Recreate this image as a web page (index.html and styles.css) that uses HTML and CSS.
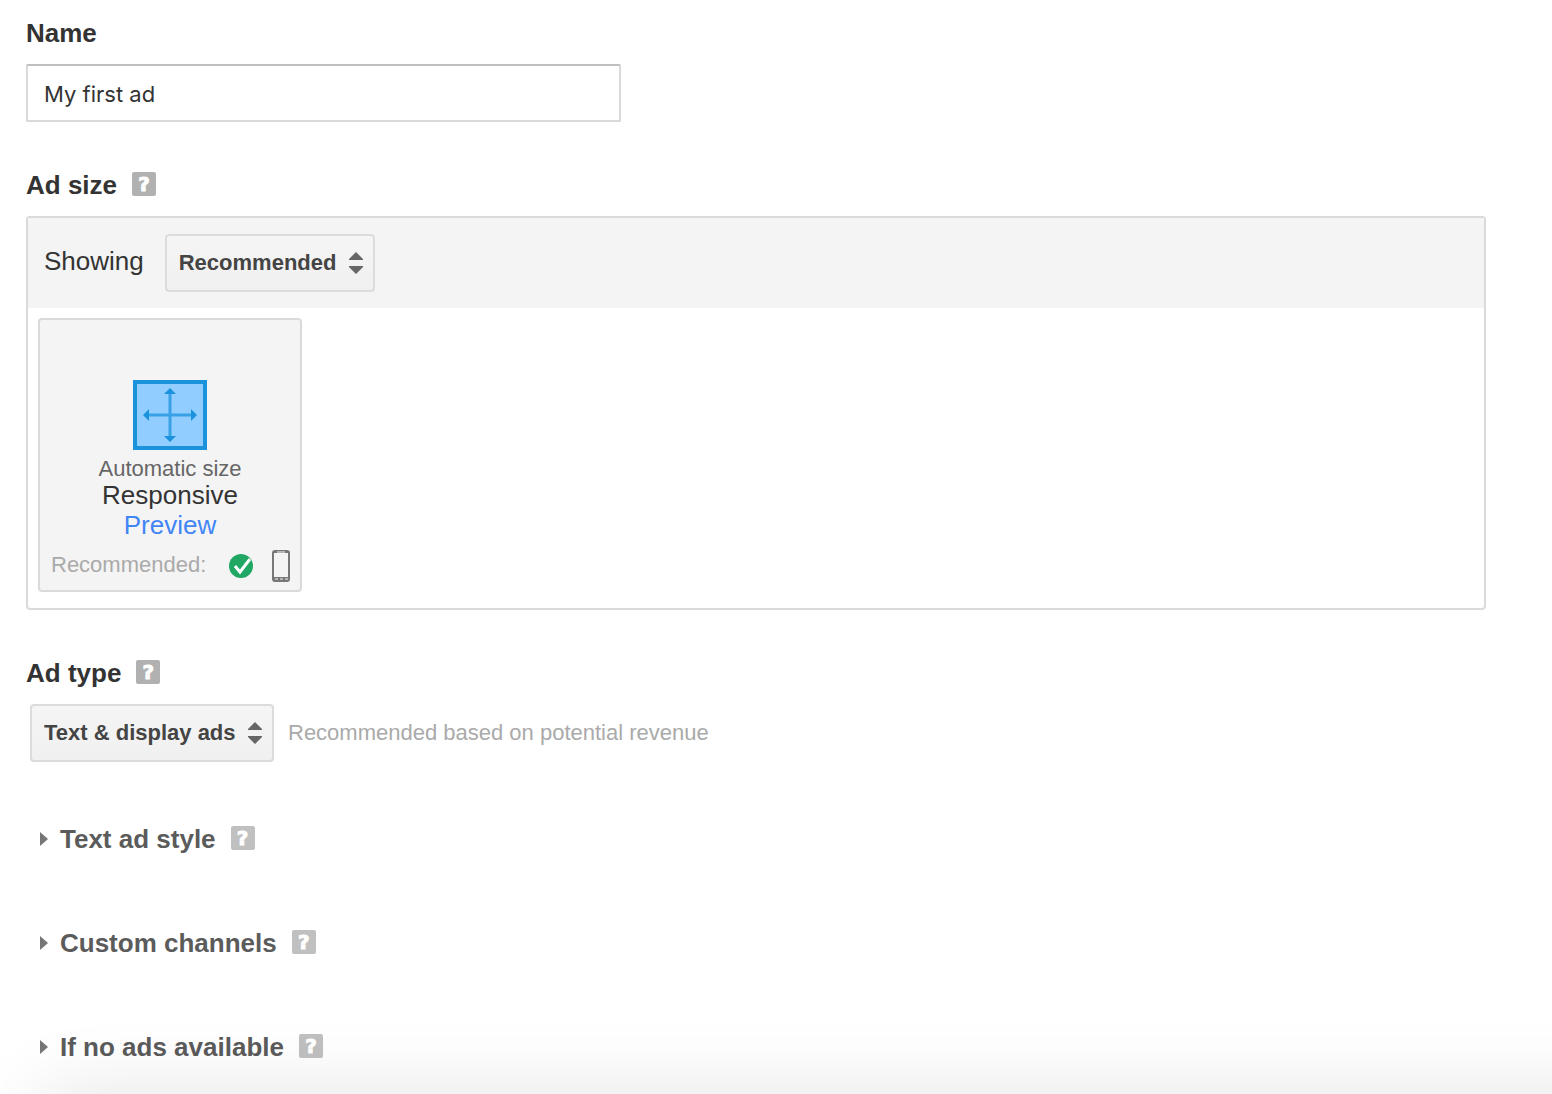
FILE: index.html
```html
<!DOCTYPE html>
<html lang="en">

<head>
  <meta charset="UTF-8" />
  <title>New ad unit</title>
  <link rel="stylesheet" href="styles.css">
</head>

<body>
  <form class="ad-form">

    <section class="field">
      <div class="heading">
        <label for="adName">Name</label>
      </div>
      <input class="text-input" type="text" id="adName" value="My first ad">
    </section>

    <section class="field">
      <div class="heading">
        <h2>Ad size</h2>
        <button type="button" class="help">?</button>
      </div>
      <div class="panel">
        <div class="panel-header">
          <label for="showing">Showing</label>
          <div class="select">
            <select id="showing">
              <option>Recommended</option>
              <option>Horizontal</option>
              <option>Vertical</option>
            </select>
            <svg class="arrows" viewBox="0 0 14 22"><path d="M7 0l7 7v1H0V7zM0 14h14v1l-7 7-7-7z" /></svg>
          </div>
        </div>
        <div class="panel-body">
          <div class="size-card">
            <svg class="size-icon" viewBox="0 0 74 70">
              <rect x="2" y="2" width="70" height="66" fill="#92cdff" stroke="#1a92dc" stroke-width="4" />
              <path d="M37 13v44M15 35h44" stroke="#38a0e4" stroke-width="3" />
              <path d="M37 8l6 6h-12zM37 62l6-6h-12zM10 35l6-6v12zM64 35l-6-6v12z" fill="#1a92dc" />
            </svg>
            <span class="size-kind">Automatic size</span>
            <span class="size-name">Responsive</span>
            <a href="#preview">Preview</a>
            <div class="size-footer">
              <span>Recommended:</span>
              <svg class="check" viewBox="0 0 24 24">
                <circle cx="12" cy="12" r="12" fill="#20a763" />
                <path d="M6 12l5 6L21 5" fill="none" stroke="#fff" stroke-width="3" />
              </svg>
              <svg class="phone" viewBox="0 0 18 32">
                <rect width="18" height="32" rx="3" fill="#777" />
                <path d="M2 3h14v24H2z" fill="#f4f4f4" />
                <path d="M5 2h8M3 29h3M8 29h3M13 29h3" stroke="#ccc" stroke-width="1.5" />
              </svg>
            </div>
          </div>
        </div>
      </div>
    </section>

    <section class="field">
      <div class="heading">
        <label for="adType">Ad type</label>
        <button type="button" class="help">?</button>
      </div>
      <div class="type-row">
        <div class="select">
          <select id="adType">
            <option>Text &amp; display ads</option>
            <option>Display ads only</option>
            <option>Text ads only</option>
          </select>
          <svg class="arrows" viewBox="0 0 14 22"><path d="M7 0l7 7v1H0V7zM0 14h14v1l-7 7-7-7z" /></svg>
        </div>
        <span class="hint">Recommended based on potential revenue</span>
      </div>
    </section>

    <div class="sections">
      <details>
        <summary>
          <h2>Text ad style</h2>
          <button type="button" class="help">?</button>
        </summary>
      </details>
      <details>
        <summary>
          <h2>Custom channels</h2>
          <button type="button" class="help">?</button>
        </summary>
      </details>
      <details>
        <summary>
          <h2>If no ads available</h2>
          <button type="button" class="help">?</button>
        </summary>
      </details>
    </div>

  </form>

  <div class="footer-shadow"></div>
</body>

</html>
```
FILE: styles.css
```css
* {
  box-sizing: border-box;
}

body {
  margin: 0;
  background: #fff;
  color: #333;
  font-family: "Liberation Sans", Arial, sans-serif;
  font-size: 26px;
  line-height: 30px;
}

h2 {
  margin: 0;
  font-size: 26px;
}

.ad-form {
  padding: 18px 66px 0 26px;
}

.field {
  margin-bottom: 48px;
}

.heading {
  display: flex;
  align-items: center;
  margin-bottom: 16px;
  font-weight: bold;
}

.help {
  width: 24px;
  height: 24px;
  margin: 0 0 2px 15px;
  padding: 0;
  border: none;
  border-radius: 2px;
  background: #b1b1b1;
  color: #fff;
  font: bold 20px/24px "DejaVu Sans", sans-serif;
  -webkit-text-stroke: 1px #fff;
}

.text-input {
  display: block;
  width: 100%;
  max-width: 595px;
  height: 58px;
  padding: 2px 16px 0;
  border: 2px solid #d9d9d9;
  border-top-color: #c0c0c0;
  border-radius: 2px;
  color: #333;
  font-family: Inter, sans-serif;
  font-size: 22px;
}

/* selects */
.select {
  position: relative;
}

.select select {
  appearance: none;
  display: block;
  height: 58px;
  padding: 0 36px 2px 12px;
  border: 2px solid #dcdcdc;
  border-radius: 4px;
  background: linear-gradient(#f5f5f5, #f0f0f0);
  color: #444;
  font: bold 22px "Liberation Sans", Arial, sans-serif;
}

.arrows {
  position: absolute;
  top: 18px;
  right: 12px;
  width: 14px;
  height: 22px;
  fill: #666;
  pointer-events: none;
}

/* ad size */
.panel {
  border: 2px solid #dadada;
  border-radius: 4px;
}

.panel-header {
  display: flex;
  align-items: center;
  gap: 21px;
  padding: 16px;
  background: #f4f4f4;
}

.panel-header label {
  padding-bottom: 4px;
}

.panel-body {
  display: flex;
  padding: 10px 10px 16px;
}

.size-card {
  display: flex;
  flex-direction: column;
  align-items: center;
  width: 264px;
  padding-top: 60px;
  border: 2px solid #dadada;
  border-radius: 4px;
  background: #f4f4f4;
}

.size-card a {
  color: #4285f4;
  text-decoration: none;
}

.size-icon {
  width: 74px;
  height: 70px;
  margin-bottom: 8px;
}

.size-kind {
  color: #666;
  font-size: 22px;
  line-height: 22px;
}

.size-footer {
  display: flex;
  align-items: center;
  align-self: stretch;
  padding: 10px 10px 8px 11px;
  color: #aaa;
  font-size: 22px;
}

.size-footer span {
  padding-bottom: 2px;
}

.check {
  width: 24px;
  height: 24px;
  margin-left: auto;
}

.phone {
  width: 18px;
  height: 32px;
  margin-left: 19px;
}

/* ad type */
.type-row {
  display: flex;
  align-items: center;
  gap: 14px;
  padding-left: 4px;
}

.hint {
  color: #aaa;
  font-size: 22px;
}

/* collapsed sections */
.sections {
  display: flex;
  flex-direction: column;
  gap: 74px;
  padding: 14px 0 0 14px;
}

summary {
  display: flex;
  align-items: center;
  opacity: 0.8;
  list-style: none;
  cursor: pointer;
}

summary::before {
  content: "";
  margin-right: 12px;
  border: 7px solid transparent;
  border-left: 8px solid #555;
  border-right: none;
}

/* shadow cast from below the fold */
.footer-shadow {
  position: fixed;
  top: 100%;
  left: 40px;
  right: -100px;
  height: 200px;
  box-shadow: 0 0 80px rgba(0, 0, 0, 0.11);
  pointer-events: none;
}
```
